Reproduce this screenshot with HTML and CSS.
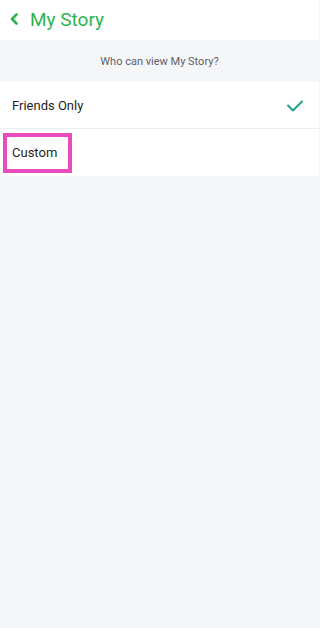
FILE: index.html
```
<!DOCTYPE html>
<html>
<head>
<meta charset="utf-8">
<link rel="stylesheet" href="styles.css">
</head>
<body>
<div class="page">
  <header class="header">
    <svg class="back" width="10" height="12" viewBox="0 0 10 12"><path d="M7.5 1.5 L3 6 L7.5 10.5" fill="none" stroke="#2eb352" stroke-width="2.6" stroke-linecap="round" stroke-linejoin="round"/></svg>
    <span class="title">My Story</span>
  </header>
  <div class="section">Who can view My Story?</div>
  <div class="list">
    <div class="row row-border">
      <span>Friends Only</span>
      <svg class="check" width="16" height="12" viewBox="0 0 16 12"><path d="M1 5.5 L6 10.5 L15 1.5" fill="none" stroke="#1aa08a" stroke-width="1.9" stroke-linecap="round" stroke-linejoin="round"/></svg>
    </div>
    <div class="row">
      <span>Custom</span>
      <div class="highlight"></div>
    </div>
  </div>
</div>
</body>
</html>
```
FILE: styles.css
```
html, body { margin: 0; padding: 0; }
body {
  background: #f5f6f8;
  font-family: Roboto, "Noto Sans", sans-serif;
  width: 319px;
  height: 628px;
}
.page { display: flex; flex-direction: column; }
.header {
  height: 40px;
  background: #ffffff;
  display: flex;
  align-items: center;
  padding-left: 9px;
  gap: 11px;
}
.back { display: block; margin-top: -2px; }
.title {
  color: #2eb352;
  font-size: 19px;
  font-weight: 400;
  margin-top: -1px;
}
.section {
  height: 42px;
  display: flex;
  align-items: center;
  justify-content: center;
  font-size: 11px;
  color: #5d6068;
}
.list { background: #ffffff; }
.row {
  position: relative;
  height: 47px;
  display: flex;
  align-items: center;
  justify-content: space-between;
  padding: 0 16px 0 12px;
  font-size: 13px;
  color: #1f1f22;
}
.row-border { height: 46px; border-bottom: 1px solid #eceef1; }
.check { display: block; margin-top: 1px; }
.highlight {
  position: absolute;
  left: 3px;
  top: 4px;
  width: 61px;
  height: 32px;
  border: 4px solid #e84bbd;
}
```
